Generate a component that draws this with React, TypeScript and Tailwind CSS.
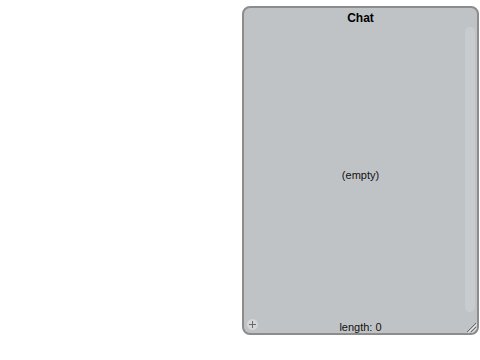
import React from "react";

export default function App() {
  return (
    <div className="w-[480px] h-[360px] bg-white relative" style={{ fontFamily: '"Liberation Sans", Arial, sans-serif' }}>
      <div className="absolute left-[242px] top-[6px] w-[237px] h-[329px] rounded-[8px] border-2 border-[#8c8c8c] bg-[#c0c3c6] flex flex-col overflow-hidden">
        <div className="h-[18px] flex items-center justify-center text-[12px] font-bold text-black pt-[1px]">Chat</div>
        <div className="flex-1 flex relative">
          <div className="flex-1 flex items-center justify-center text-[11px] text-[#111] pl-[12px] pt-[4px]">(empty)</div>
          <div className="w-[10px] mr-[2px] mt-[1px] mb-[8px] rounded-[5px] bg-[#c9cccf]" />
        </div>
        <div className="h-[14px] flex items-center justify-center text-[11px] text-[#111] relative mb-[-1px] pt-[1px]">
          length: 0
          <div className="absolute left-[3px] top-[-1px] w-[11px] h-[11px] rounded-full bg-[#d4d6d8] flex items-center justify-center">
            <svg width="9" height="9" viewBox="0 0 9 9">
              <path d="M4.5 1v7M1 4.5h7" stroke="#6a6a6a" strokeWidth="1" />
            </svg>
          </div>
          <svg className="absolute right-[0px] bottom-[1px]" width="12" height="12" viewBox="0 0 12 12">
            <path d="M11 2L2 11M11 6L6 11M11 10L10 11" stroke="#6a6a6a" strokeWidth="1" />
            <path d="M12 3L3 12M12 7L7 12" stroke="#e6e6e6" strokeWidth="1" />
          </svg>
        </div>
      </div>
    </div>
  );
}
